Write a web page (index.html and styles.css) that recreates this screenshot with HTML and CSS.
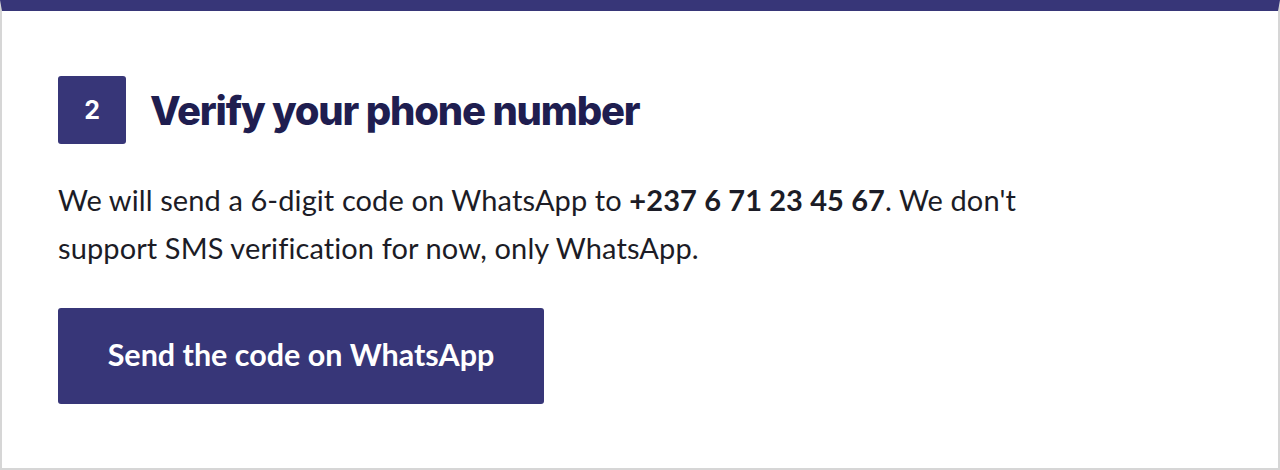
FILE: index.html
```html
<!DOCTYPE html>
<html lang="en">
<head>
<meta charset="utf-8">
<title>Verify your phone number</title>
<link rel="stylesheet" href="styles.css">
</head>
<body>
<section class="card">
  <div class="step-head">
    <span class="step-badge">2</span>
    <h2 class="step-title">Verify your phone number</h2>
  </div>
  <p class="step-text">We will send a 6-digit code on WhatsApp to <strong>+237 6 71 23 45 67</strong>. We don't support SMS verification for now, only WhatsApp.</p>
  <button class="send-btn" type="button">Send the code on WhatsApp</button>
</section>
</body>
</html>
```

FILE: styles.css
```css
* { box-sizing: border-box; }
html, body { margin: 0; padding: 0; background: #fff; }
.card {
  width: 1280px;
  height: 470px;
  border: 2px solid #d6d6d6;
  border-top: 11px solid #373678;
  padding: 65px 56px 0;
  background: #fff;
}
.step-head {
  display: flex;
  align-items: center;
  gap: 24px;
}
.step-badge {
  width: 68px;
  height: 68px;
  border-radius: 3px;
  background: #373678;
  color: #fff;
  display: flex;
  align-items: center;
  justify-content: center;
  font-family: Inter, "Liberation Sans", sans-serif;
  font-weight: 700;
  font-size: 25px;
}
.step-title {
  margin: 0;
  font-family: Inter, "Liberation Sans", sans-serif;
  font-weight: 800;
  font-size: 40px;
  letter-spacing: -1.2px;
  color: #1f1e50;
}
.step-text {
  margin: 32px 0 0;
  max-width: 990px;
  font-family: Lato, "Open Sans", sans-serif;
  font-size: 29px;
  line-height: 48px;
  letter-spacing: 0.1px;
  color: #1c1c26;
}
.step-text strong { font-weight: 700; }
.send-btn {
  display: block;
  margin-top: 36px;
  width: 486px;
  height: 96px;
  padding: 0 0 5px;
  border: none;
  border-radius: 3px;
  background: #373678;
  color: #fff;
  font-family: Lato, "Open Sans", sans-serif;
  font-weight: 700;
  font-size: 30.5px;
  cursor: pointer;
}
```
